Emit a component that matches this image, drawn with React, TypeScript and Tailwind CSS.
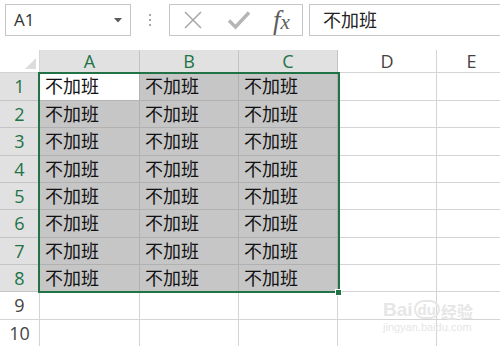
const cols = [
  { key: "A", w: "w-[100px]", sel: true },
  { key: "B", w: "w-[99px]", sel: true },
  { key: "C", w: "w-[99px]", sel: true },
  { key: "D", w: "w-[99px]", sel: false },
  { key: "E", w: "w-[70px]", sel: false },
];

const rowHeights = ["h-[28px]", "h-[27px]", "h-[28px]", "h-[27px]", "h-[27px]", "h-[28px]", "h-[27px]", "h-[27px]", "h-[28px]", "h-[27px]"];

const Toolbar = () => (
  <div className="h-[50px] flex items-start pt-[4px] pl-[5px]">
    <div className="shrink-0 w-[126px] h-[32px] border border-[#c6c6c6] flex items-center justify-between pl-[8px] pr-[8px]">
      <span className="text-[17px] text-[#333]">A1</span>
      <svg width="8" height="5" viewBox="0 0 8 5"><path d="M0 0h8L4 4.5z" fill="#5a5a5a" /></svg>
    </div>
    <div className="shrink-0 w-[38px] h-[32px] flex flex-col items-center justify-center gap-[3px]">
      <span className="w-[2px] h-[2px] bg-[#a8a8a8]" />
      <span className="w-[2px] h-[2px] bg-[#a8a8a8]" />
      <span className="w-[2px] h-[2px] bg-[#a8a8a8]" />
    </div>
    <div className="shrink-0 w-[134px] h-[32px] border border-[#c6c6c6] flex items-center">
      <svg className="ml-[13px]" width="20" height="20" viewBox="0 0 20 20">
        <path d="M2 2L18 18M18 2L2 18" stroke="#a9a9a9" strokeWidth="1.6" />
      </svg>
      <svg className="ml-[24px]" width="24" height="20" viewBox="0 0 24 20">
        <path d="M2 10.5L8.5 17L22 2.5" stroke="#b5b5b5" strokeWidth="3.4" fill="none" />
      </svg>
      <span className="ml-[22px] text-[27px] leading-none italic text-[#5e5e5e] [font-family:'Liberation_Serif',serif]">
        f<span className="text-[21px]">x</span>
      </span>
    </div>
    <div className="shrink-0 ml-[6px] w-[220px] h-[32px] border border-[#c6c6c6] flex items-center pl-[13px]">
      <span className="text-[18px] text-[#222]">不加班</span>
    </div>
  </div>
);

const HeaderRow = () => (
  <div className="flex h-[23px]">
    <div className="w-[40px] shrink-0 border-r border-b border-[#d4d4d4] bg-white relative">
      <svg className="absolute right-[3px] bottom-[3px]" width="11" height="11" viewBox="0 0 11 11">
        <path d="M11 0V11H0z" fill="#dcdcdc" />
      </svg>
    </div>
    {cols.map((c) => (
      <div
        key={c.key}
        className={`${c.w} shrink-0 border-r border-b flex items-center justify-center text-[18px] ${
          c.sel ? "bg-[#e1e1e1] text-[#217346] border-[#c4c4c4]" : "bg-white text-[#444] border-[#d4d4d4]"
        }`}
      >
        {c.key}
      </div>
    ))}
  </div>
);

const Row = ({ n, h }: { n: number; h: string }) => {
  const selRow = n <= 8;
  return (
    <div className={`flex ${h}`}>
      <div
        className={`w-[40px] shrink-0 border-r border-b flex items-center justify-center text-[18px] ${
          selRow ? "bg-[#e1e1e1] text-[#217346] border-[#c4c4c4]" : "bg-white text-[#444] border-[#d4d4d4]"
        }`}
      >
        {n}
      </div>
      {cols.map((c) => {
        const inSel = selRow && c.sel;
        const active = n === 1 && c.key === "A";
        return (
          <div
            key={c.key}
            className={`${c.w} shrink-0 border-r border-b flex items-center pl-[5px] text-[18px] text-[#111] ${
              inSel ? (active ? "bg-white border-[#b4b4b4]" : "bg-[#c6c6c6] border-[#b1b1b1]") : "bg-white border-[#d4d4d4]"
            }`}
          >
            {inSel ? "不加班" : ""}
          </div>
        );
      })}
    </div>
  );
};

export default function App() {
  return (
    <div className="w-[500px] h-[346px] overflow-hidden bg-white relative [font-family:'Open_Sans','Noto_Sans_CJK_SC',sans-serif]">
      <Toolbar />
      <HeaderRow />
      {rowHeights.map((h, i) => (
        <Row key={i} n={i + 1} h={h} />
      ))}
      {/* selection outline */}
      <div className="absolute left-[38px] top-[72px] w-[302px] h-[221px] border-2 border-[#217346] pointer-events-none" />
      <div className="absolute left-[335px] top-[289px] w-[7px] h-[7px] bg-[#217346] border border-white" />
      {/* watermark */}
      <div className="absolute left-[383px] top-[300px] text-[#e6e6e6] leading-none pointer-events-none">
        <div className="flex items-end gap-[1px] text-[19px] font-bold [font-family:'Liberation_Sans',sans-serif]">
          <span>Bai</span>
          <span className="border-2 border-[#e6e6e6] rounded-full px-[2px] text-[15px]">du</span>
          <span className="text-[16px] [font-family:'Noto_Sans_CJK_SC',sans-serif]">经验</span>
        </div>
        <div className="mt-[3px] text-[11px] [font-family:'Liberation_Sans',sans-serif]">jingyan.baidu.com</div>
      </div>
    </div>
  );
}
